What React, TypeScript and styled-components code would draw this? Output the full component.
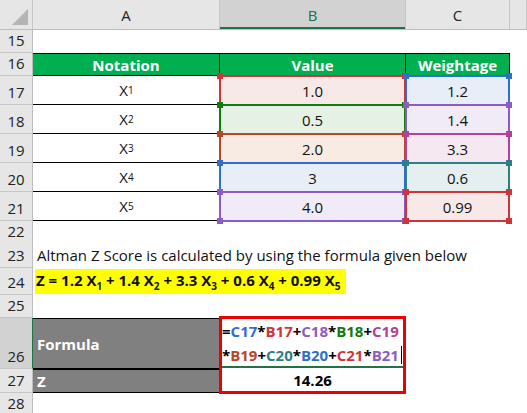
import React from "react";
import styled, { createGlobalStyle } from "styled-components";

const G = createGlobalStyle`
  body { margin: 0; background: #fff; font-family: "Open Sans", "Liberation Sans", sans-serif; }
`;
const COLS = "33px 187px 186px 104px 1fr";
const Sheet = styled.div`width: 527px; height: 413px; overflow: hidden; background: #fff;`;
const Row = styled.div<{ $h: number }>`
  display: grid; grid-template-columns: ${COLS}; height: ${p => p.$h}px;
`;
const HeadRow = styled(Row)`background: #e6e6e6; border-bottom: 1px solid #bdbdbd; box-sizing: border-box;`;
const ColHead = styled.div<{ $sel?: boolean }>`
  display: flex; align-items: center; justify-content: center; font-size: 15px; color: #222;
  border-right: 1px solid #c6c6c6; background: ${p => (p.$sel ? "#d2d2d2" : "transparent")};
  box-shadow: ${p => (p.$sel ? "inset 0 -2px 0 #217346" : "none")};
  color: ${p => (p.$sel ? "#217346" : "#222")};
`;
const Corner = styled.div`
  position: relative; border-right: 1px solid #c6c6c6;
  &::after { content: ""; position: absolute; right: 4px; bottom: 4px; width: 0; height: 0;
    border-left: 16px solid transparent; border-bottom: 16px solid #b4b4b4; }
`;
const RowNum = styled.div<{ $sel?: boolean }>`
  background: ${p => (p.$sel ? "#d2d2d2" : "#e6e6e6")}; border-right: 1px solid ${p => (p.$sel ? "#217346" : "#bdbdbd")};
  border-bottom: 1px solid #c6c6c6; box-sizing: border-box;
  display: flex; align-items: flex-end; justify-content: center; padding-bottom: 2px;
  font-size: 15px; color: #222;
`;
const Cell = styled.div<{ $bb?: boolean; $align?: string }>`
  display: flex; align-items: center; justify-content: ${p => p.$align || "center"};
  font-size: 15px; color: #111; box-sizing: border-box; position: relative;
  border-bottom: ${p => (p.$bb ? "1.5px solid #000" : "none")}; white-space: nowrap;
`;
const GreenCell = styled(Cell)`
  background: #00b050; color: #fff; font-weight: 700; border-right: 1px solid #000;
  border-top: 1px solid #000; border-bottom: 1px solid #000;
`;
const Box = styled.div<{ $c: string; $bg: string }>`
  position: relative; background: ${p => p.$bg}; border: 2px solid ${p => p.$c};
  margin: -1px 0 -1px -1px; box-sizing: border-box; display: flex; align-items: center;
  justify-content: center; font-size: 15px; color: #111; z-index: 1;
`;
const Handle = styled.span<{ $c: string; $x: string; $y: string }>`
  position: absolute; width: 6px; height: 6px; background: ${p => p.$c};
  ${p => p.$x}: -4px; ${p => p.$y}: -4px;
`;
const Sub = styled.sub`font-size: 10px; vertical-align: -4px;`;
const Highlight = styled.span`background: #ffff00; font-weight: 700; padding: 1px 6px 1px 1px; font-size: 15px;`;
const Gray = styled.div<{ $bt?: boolean }>`
  background: #808080; color: #fff; font-weight: 700; font-size: 15px; display: flex; align-items: center;
  padding-left: 4px; border-top: 1px solid #000; border-bottom: 1px solid #000; box-sizing: border-box;
`;
const FormulaBox = styled.div`
  grid-column: 3; grid-row: 1 / span 2; border: 3px solid #e00; box-sizing: border-box;
  margin: -2px 0 -1px -1px; display: grid; grid-template-rows: 49px 1fr; z-index: 2; background: #fff;
`;
const FText = styled.div`
  font-weight: 700; font-size: 15px; line-height: 24px; padding: 0 0 0 0; border-bottom: 2px solid #217346;
  white-space: normal; word-break: break-all;
`;
const Result = styled.div`display: flex; align-items: center; justify-content: center; font-weight: 700; font-size: 15px;`;
const Caret = styled.span`display: inline-block; width: 1px; height: 18px; background: #000; vertical-align: -3px; margin-left: 2px;`;
const Two = styled.div`display: grid; grid-template-columns: ${COLS}; grid-template-rows: 51px 24px;`;

const boxes: [string, string, string, string, string, string][] = [
  ["1.0", "#d13438", "#f8e9e9", "1.2", "#2f6fcb", "#e8eef8"],
  ["0.5", "#107c10", "#e5f1e5", "1.4", "#8e5cc0", "#f0ebf6"],
  ["2.0", "#b7472a", "#f8ebe3", "3.3", "#b4409a", "#f5e8f1"],
  ["3", "#2f6fcb", "#e8eef8", "0.6", "#2e7d8a", "#e6eff0"],
  ["4.0", "#8e5cc0", "#f0ebf6", "0.99", "#d13438", "#f8e9e9"],
];

const Handles = ({ c }: { c: string }) => (
  <>
    <Handle $c={c} $x="left" $y="top" /><Handle $c={c} $x="right" $y="top" />
    <Handle $c={c} $x="left" $y="bottom" /><Handle $c={c} $x="right" $y="bottom" />
  </>
);

const parts: [string, string][] = [
  ["=", "#000"], ["C17", "#2f6fcb"], ["*", "#000"], ["B17", "#d13438"], ["+", "#000"], ["C18", "#8e5cc0"], ["*", "#000"],
  ["B18", "#107c10"], ["+", "#000"], ["C19", "#b4409a"], ["*", "#000"], ["B19", "#b7472a"], ["+", "#000"],
  ["C20", "#2e7d8a"], ["*", "#000"], ["B20", "#2f6fcb"], ["+", "#000"], ["C21", "#d13438"], ["*", "#000"], ["B21", "#8e5cc0"],
];

export default function App() {
  return (
    <Sheet>
      <G />
      <HeadRow $h={30}>
        <Corner /><ColHead>A</ColHead><ColHead $sel>B</ColHead><ColHead>C</ColHead><ColHead />
      </HeadRow>
      <Row $h={23}><RowNum>15</RowNum><Cell /><Cell /><Cell /><Cell /></Row>
      <Row $h={23}><RowNum>16</RowNum><GreenCell>Notation</GreenCell><GreenCell>Value</GreenCell><GreenCell>Weightage</GreenCell><Cell /></Row>
      {boxes.map((b, i) => (
        <Row $h={29} key={i}>
          <RowNum>{17 + i}</RowNum>
          <Cell $bb>X<Sub>{i + 1}</Sub></Cell>
          <Box $c={b[1]} $bg={b[2]}>{b[0]}<Handles c={b[1]} /></Box>
          <Box $c={b[4]} $bg={b[5]}>{b[3]}<Handles c={b[4]} /></Box>
          <Cell />
        </Row>
      ))}
      <Row $h={20}><RowNum>22</RowNum><Cell /><Cell /><Cell /><Cell /></Row>
      <Row $h={27}><RowNum>23</RowNum><Cell $align="flex-start" style={{ gridColumn: "2 / 5", paddingLeft: 4 }}>Altman Z Score is calculated by using the formula given below</Cell></Row>
      <Row $h={27}><RowNum>24</RowNum><Cell $align="flex-start" style={{ gridColumn: "2 / 5", paddingLeft: 2 }}>
        <Highlight>Z = 1.2 X<Sub>1</Sub> + 1.4 X<Sub>2</Sub> + 3.3 X<Sub>3</Sub> + 0.6 X<Sub>4</Sub> + 0.99 X<Sub>5</Sub></Highlight>
      </Cell></Row>
      <Row $h={23}><RowNum>25</RowNum><Cell /><Cell /><Cell /><Cell /></Row>
      <Two>
        <RowNum $sel style={{ gridRow: 1 }}>26</RowNum>
        <Gray style={{ gridRow: 1, gridColumn: 2 }}>Formula</Gray>
        <FormulaBox>
          <FText>{parts.map(([t, c], i) => <span key={i} style={{ color: c }}>{t}</span>)}<Caret /></FText>
          <Result>14.26</Result>
        </FormulaBox>
        <RowNum style={{ gridRow: 2, gridColumn: 1 }}>27</RowNum>
        <Gray style={{ gridRow: 2, gridColumn: 2 }}>Z</Gray>
      </Two>
      <Row $h={22}><RowNum>28</RowNum><Cell /><Cell /><Cell /><Cell /></Row>
    </Sheet>
  );
}
